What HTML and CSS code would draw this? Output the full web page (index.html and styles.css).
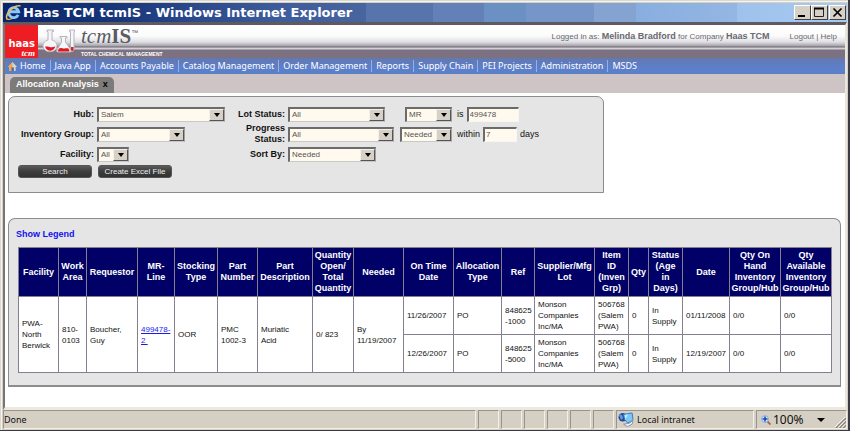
FILE: index.html
```html
<!DOCTYPE html>
<html lang="en">
<head>
<meta charset="utf-8">
<title>Haas TCM tcmIS - Windows Internet Explorer</title>
<link rel="stylesheet" href="styles.css">
</head>
<body>
<div class="window">
  <header class="titlebar">
    <svg class="ie" viewBox="0 0 18 18" aria-hidden="true">
      <path d="M14 11.600a5.300 5.300 0 1 1 .5-3.400H5" fill="none" stroke="#8cc8fa" stroke-width="3"/>
      <path d="M2.500 16.500C-1 12 8 1 16.500 2" fill="none" stroke="#e8bd5c" stroke-width="1.600"/>
      <path d="M2 16c2 1 4 0 6-1" fill="none" stroke="#e8bd5c" stroke-width="1.200"/>
    </svg>
    <h1>Haas TCM tcmIS - Windows Internet Explorer</h1>
    <button class="winbtn" aria-label="Minimize"><svg viewBox="0 0 13 11"><path d="M2 9h7" stroke="#000" stroke-width="2"/></svg></button>
    <button class="winbtn" aria-label="Maximize"><svg viewBox="0 0 13 11"><path d="M1.500 1.500h9v8h-9z" fill="none" stroke="#222"/><path d="M1 1.500h10" stroke="#000" stroke-width="2"/></svg></button>
    <button class="winbtn" aria-label="Close"><svg viewBox="0 0 13 11"><path d="M2.500 1.500l8 8m0-8l-8 8" stroke="#000" stroke-width="1.700"/></svg></button>
  </header>

  <div class="page">
    <div class="banner">
      <div class="haas"><span>haas</span><i>tcm</i></div>
      <svg class="flasks" viewBox="0 0 40 32" aria-hidden="true">
        <g fill="#f6f6f8" stroke="#b4b4bc">
          <path d="M9 5h6.500v1.500H14V15c4 1 6 5 4.500 8-2 5-11 5-13 0-1.500-3 .5-7 4.500-8V6.500H9z"/>
          <path d="M22 11.500h7V13h-1.500v4l5.500 8q1 2-1 2H20q-2 0-1-2l4.500-8v-4H22z"/>
          <path d="M31.500 5h5v1.500H36V25q-1.500 3-3.500 0V6.500h-1z"/>
        </g>
        <path d="M7 21.500c2 6 8.500 5.500 10.500 0-2.500 0-4 1.500-6 .5-1.500-.5-3-.5-4.500-.5z" fill="#e01820"/>
        <path d="M21 23.500c2.500-1.500 3.500.5 5.500 0 1.500-.5 2.500-.5 4 0l1 2q0 1-1 1H21q-1.500 0-1-1z" fill="#e01820"/>
        <path d="M33 22h2.500v3q-1 2-2.500 0z" fill="#e01820"/>
      </svg>
      <div class="brand"><div class="name"><i>tcm</i><b>IS</b><sup>™</sup></div><div class="tag">TOTAL CHEMICAL MANAGEMENT</div></div>
      <div class="user">Logged in as: <b>Melinda Bradford</b> for Company <b>Haas TCM</b></div>
      <div class="session"><a href="#">Logout</a> | <a href="#">Help</a></div>
    </div>
    <nav>
      <a href="#"><svg viewBox="0 0 10 10" aria-hidden="true"><path d="M5 0l5 5.500H8.500V10h-7V5.500H0z" fill="#dcd6cc"/><path d="M5 0v10H1.500V5.500H0z" fill="#f0a648"/><path d="M4 6h2.500v4H4z" fill="#4869a8"/></svg>Home</a>
      <a href="#">Java App</a><a href="#">Accounts Payable</a><a href="#">Catalog Management</a><a href="#">Order Management</a><a href="#">Reports</a><a href="#">Supply Chain</a><a href="#">PEI Projects</a><a href="#">Administration</a><a href="#">MSDS</a>
    </nav>
    <div class="tabs"><div class="tab">Allocation Analysis<button aria-label="Close tab">x</button></div></div>

    <main>
      <form class="panel search" onsubmit="return false">
        <div class="fields">
          <label for="hub">Hub:</label>
          <span class="select w-hub"><select id="hub"><option>Salem</option></select><i></i></span>
          <label for="lot">Lot Status:</label>
          <span class="select w-lot"><select id="lot"><option>All</option></select><i></i></span>
          <span class="select w-mr"><select aria-label="Search field"><option>MR</option></select><i></i></span>
          <span class="rule"><label for="mr">is</label><input id="mr" class="w-number" value="499478"></span>

          <label for="group">Inventory Group:</label>
          <span class="select w-group"><select id="group"><option>All</option></select><i></i></span>
          <label for="progress">Progress Status:</label>
          <span class="select w-progress"><select id="progress"><option>All</option></select><i></i></span>
          <span class="select w-date"><select aria-label="Date field"><option>Needed</option></select><i></i></span>
          <span class="rule"><label for="days">within</label><input id="days" class="w-days" value="7"><span>days</span></span>

          <label for="facility">Facility:</label>
          <span class="select w-facility"><select id="facility"><option>All</option></select><i></i></span>
          <label for="sort">Sort By:</label>
          <span class="select w-sort"><select id="sort"><option>Needed</option></select><i></i></span>
        </div>
        <div class="actions"><button>Search</button><button>Create Excel File</button></div>
      </form>

      <section class="panel results">
        <a class="legend" href="#">Show Legend</a>
        <table>
          <colgroup><col class="c40"><col class="c28"><col class="c51"><col class="c37"><col class="c43"><col class="c40"><col class="c55"><col class="c41"><col class="c50"><col class="c50"><col class="c48"><col class="c33"><col class="c60"><col class="c34"><col class="c20"><col class="c34"><col class="c47"><col class="c51"><col class="c51"></colgroup>
          <thead><tr>
            <th>Facility</th><th>Work Area</th><th>Requestor</th><th>MR-<br>Line</th><th>Stocking Type</th><th>Part Number</th><th>Part Description</th><th>Quantity Open/ Total Quantity</th><th>Needed</th><th>On Time Date</th><th>Allocation Type</th><th>Ref</th><th>Supplier/Mfg Lot</th><th>Item<br>ID<br>(Inven Grp)</th><th>Qty</th><th>Status (Age<br>in<br>Days)</th><th>Date</th><th>Qty On Hand Inventory Group/Hub</th><th>Qty Available Inventory Group/Hub</th>
          </tr></thead>
          <tbody>
            <tr>
              <td rowspan="2">PWA-<br>North Berwick</td><td rowspan="2">810-0103</td><td rowspan="2">Boucher, Guy</td><td rowspan="2"><a href="#">499478-<br>2&nbsp;</a></td><td rowspan="2">OOR</td><td rowspan="2">PMC<br>1002-3</td><td rowspan="2">Muriatic<br>Acid</td><td rowspan="2">0/ 823</td><td rowspan="2">By<br>11/19/2007</td>
              <td>11/26/2007</td><td>PO</td><td>848625<br>-1000</td><td>Monson Companies Inc/MA</td><td>506768 (Salem PWA)</td><td>0</td><td>In<br>Supply</td><td>01/11/2008</td><td>0/0</td><td>0/0</td>
            </tr>
            <tr>
              <td>12/26/2007</td><td>PO</td><td>848625<br>-5000</td><td>Monson Companies Inc/MA</td><td>506768 (Salem PWA)</td><td>0</td><td>In<br>Supply</td><td>12/19/2007</td><td>0/0</td><td>0/0</td>
            </tr>
          </tbody>
        </table>
      </section>
    </main>
  </div>

  <footer>
    <div class="done">Done</div><div class="slot"></div><div class="slot"></div><div class="slot"></div><div class="slot"></div><div class="slot"></div><div class="slot"></div>
    <div class="zone"><svg viewBox="0 0 17 16" aria-hidden="true"><circle cx="5" cy="5.500" r="4.500" fill="#1f4c94"/><path d="M1 3q3-1 4 2t-2 3z" fill="#6a9ad8"/><path d="M6 2.500L15 1l1 7q-2 3-6 3.500Q6 9 6 2.500z" fill="#7cc8f6" stroke="#3c78c0"/><path d="M7 3.500l4-1-3 5z" fill="#c8ecff"/><path d="M6 13l6-1 4-3-1 4-5 2.500z" fill="#f2f4f8" stroke="#8490a8"/></svg>Local intranet</div>
    <div class="zoom"><svg class="glass" viewBox="0 0 10 10" aria-hidden="true"><path d="M6 6l3.500 3.500" stroke="#a86848" stroke-width="1.800"/><circle cx="4" cy="4" r="3.400" fill="#d8ecff" stroke="#86a8dc"/><path d="M4 1.500v5M1.500 4h5" stroke="#1848b0" stroke-width="1.600"/></svg>100%<svg class="caret" viewBox="0 0 8 4" aria-hidden="true"><path d="M0 0h8L4 4z"/></svg>
      <svg class="grip" viewBox="0 0 12 12" aria-hidden="true"><path d="M1 12L12 1M5 12l7-7M9 12l3-3" stroke="#8a867c" stroke-width="1.500"/><path d="M0 11L11 0M4 11l7-7M8 11l3-3" stroke="#fff"/></svg></div>
  </footer>
</div>
</body>
</html>
```
FILE: styles.css
```css
* { box-sizing: border-box; }
body { margin: 0; font: 9px/11px "Liberation Sans", Arial, sans-serif; color: #111; }
button, input, select { font: inherit; margin: 0; }
a { color: inherit; text-decoration: none; }

.window {
  display: flex; flex-direction: column; min-height: 100vh;
  background: #d6cfc3; border: solid #3c3c44; border-width: 0 2px 2px 0;
  box-shadow: inset 1px 1px #ddd8cc, inset 2px 2px #f6f4ee, inset -1px -1px #d6cfc3;
  padding: 3px 1px 1px 3px;
}

.titlebar {
  display: flex; align-items: center; height: 19px; padding: 0 1px 0 2px;
  background: linear-gradient(90deg, #0a246a 0, #153478 12%, #3f5c9c 33%, #48659f 43%, #5874ad 43%, #5874ad 51%, #6480b8 51%, #6480b8 57%, #6b90c4 57%, #6b90c4 62%, #7695c8 62%, #7695c8 70%, #85a3d1 70%, #85a3d1 75%, #88aee0 75%, #94b6e2 87%, #9fc2ec 87%, #a6caf0 100%);
}
.ie { width: 17px; height: 17px; }
h1 { flex: 1; margin: 0 0 0 1px; color: #fff; font: bold 13px/19px "DejaVu Sans", Verdana, sans-serif; white-space: nowrap; }
.winbtn {
  display: grid; place-items: center; width: 17px; height: 15px; padding: 0;
  background: #d6d0c6; border: 1px solid; border-color: #fff #404040 #404040 #fff;
}
.winbtn:last-child { margin-left: 1px; }
.winbtn svg { width: 13px; height: 11px; }

.page {
  flex: 1; display: flex; flex-direction: column; background: #fff;
  border: solid; border-width: 3px 2px 3px 2px; border-color: #5f5a62 #e8e6e0 #ece9e0 #77747c;
}

.banner {
  display: flex; height: 33px; color: #6a6870; font-size: 8px; line-height: 23px;
  background: linear-gradient(#fff 0, #fbfbfc 11px, #dfdfe3 17px, #a5a1aa 21px, #6d6672 22px, #d4d0d8 23px, #d4d0d8 24px, #7b7181 25px, #7b7181 100%);
}
.banner b { font-size: 9px; }
.haas {
  width: 33px; padding: 14px 3px 0 0; background: #ee1c23; color: #fff;
  font: bold 10px/10px "DejaVu Sans", sans-serif; text-align: right;
}
.haas span, .haas i { display: block; }
.haas i { font: italic bold 9px/8px "Liberation Serif", serif; }
.flasks { width: 40px; height: 32px; }
.brand { flex: 1; padding-left: 3px; }
.name { color: #5c5a62; font: 21px/23px "Liberation Serif", serif; height: 25px; }
.banner .name b { font-size: 21px; }
.name sup { font: 7px/7px "Liberation Sans", sans-serif; vertical-align: 8px; }
.tag { color: #fff; font: bold 5px/8px "Liberation Sans", sans-serif; }
.session { margin: 0 8px 0 20px; }

nav {
  display: flex; align-items: center; height: 16px; padding-left: 3px; color: #fff;
  background: linear-gradient(#6478ae, #5c7fcb 60%, #5a80c8);
  font: 9px/12px "Noto Sans", Tahoma, sans-serif;
}
nav a { display: flex; align-items: center; padding: 0 4px; }
nav a + a { border-left: 1px solid #93b2e6; }
nav a:first-child { padding-left: 0; }
nav svg { width: 9px; height: 9px; margin-right: 3px; }

.tabs { display: flex; align-items: flex-end; height: 19px; padding-left: 5px; background: #cfc4c5; }
.tab { height: 16px; padding: 0 6px; border-radius: 5px 5px 0 0; background: #7d7b79; color: #fff; font-weight: bold; line-height: 15px; }
.tab button { border: 0; padding: 0; margin-left: 4px; background: none; color: #000; font-weight: bold; }

main { flex: 1; padding: 3px 4px 20px 3px; }
.panel { border: 1px solid #8c8c90; background: #e5e5e5; }
.search { width: 71.500%; height: 97px; padding: 7px 0 0 9px; border-radius: 7px 7px 0 0; }
.fields {
  display: grid; grid-template-columns: 76px 128px 57px 106px 55px 1fr;
  grid-auto-rows: 20px; column-gap: 3px; align-items: center;
}
.fields > label { text-align: right; font-weight: bold; }
.rule { display: flex; align-items: center; gap: 3px; padding-left: 2px; }
.select { display: grid; height: 15px; border: 1px solid; border-width: 2px 1px 1px 2px; border-color: #6b6b6b #a0a0a0 #c8c8c8 #6b6b6b; background: #fff9ee; }
.select select, .select i { grid-area: 1 / 1; }
.select select {
  appearance: none; width: 100%; min-width: 0; height: 12px; padding: 0 0 0 2px; border: 0; border-radius: 0;
  background: transparent; color: #555; font-size: 8px; line-height: 12px;
}
.select i {
  justify-self: end; display: grid; place-items: center; width: 15px; height: 12px; pointer-events: none;
  background: #d6d0c6; border: 1px solid; border-color: #f4f0e8 #555 #555 #f4f0e8;
}
.select i::before { content: ""; border: 3px solid transparent; border-top: 4px solid #000; border-bottom: 0; }
.rule input {
  height: 15px; padding: 0 0 0 1px; border: 1px solid; border-width: 2px 1px 1px 2px; border-radius: 0;
  border-color: #6b6b6b #f6f6f6 #f6f6f6 #6b6b6b; background: #fff9ee; color: #555; font-size: 8px;
}
.w-hub { width: 128px; }
.w-group { width: 88px; }
.w-facility { width: 32px; }
.w-lot { width: 97px; }
.w-progress { width: 106px; }
.w-sort { width: 88px; }
.w-mr { width: 47px; justify-self: end; }
.w-date { width: 52px; justify-self: end; }
.w-number { width: 52px; }
.w-days { width: 34px; }
.actions { display: flex; gap: 6px; margin-top: 1px; }
.actions button {
  width: 74px; height: 13px; padding: 0; border: 1px solid #555; border-radius: 3px;
  background: linear-gradient(#5b5b5b, #3c3c3c 50%, #333); color: #eee; font-size: 8px; line-height: 10px;
}

.results { margin-top: 25px; padding: 10px 9px 12px 9px; border-radius: 7px 7px 0 0; border-bottom-width: 2px; }
.legend { display: block; margin: 0 0 7px -2px; color: #1212ee; font-weight: bold; }
table { width: 100%; table-layout: fixed; border-collapse: collapse; background: #fff; }
th, td { border: 1px solid #85808e; padding: 2px 3px; }
th { height: 49px; padding: 2px 0; background: #000066; color: #fff; line-height: 11px; }
td { height: 38px; font-size: 8px; line-height: 11px; text-align: left; }
td a { color: #1a1aee; text-decoration: underline; }
.c20 { width: 20px; } .c28 { width: 28px; } .c33 { width: 33px; } .c34 { width: 34px; }
.c37 { width: 37px; } .c40 { width: 40px; } .c41 { width: 41px; } .c43 { width: 43px; }
.c47 { width: 47px; } .c48 { width: 48px; } .c50 { width: 50px; } .c51 { width: 51px; }
.c55 { width: 55px; } .c60 { width: 60px; }

footer { display: flex; gap: 2px; height: 19px; font: 9px/18px "Noto Sans", Tahoma, sans-serif; }
footer > div { border: 1px solid; border-color: #98948c #f2f0ea #f2f0ea #98948c; }
.done { flex: 1; }
.slot { width: 21px; }
.zone, .zoom { display: flex; align-items: center; }
.zone { width: 138px; gap: 3px; padding-left: 1px; }
.zone svg { width: 16px; height: 15px; }
.zoom { width: 91px; padding-left: 4px; font-size: 12px; }
.zoom .glass { width: 10px; height: 10px; margin-right: 2px; }
.zoom .caret { width: 8px; height: 4px; margin-left: 13px; }
.zoom .grip { width: 11px; height: 11px; margin-left: auto; align-self: flex-end; }
```
